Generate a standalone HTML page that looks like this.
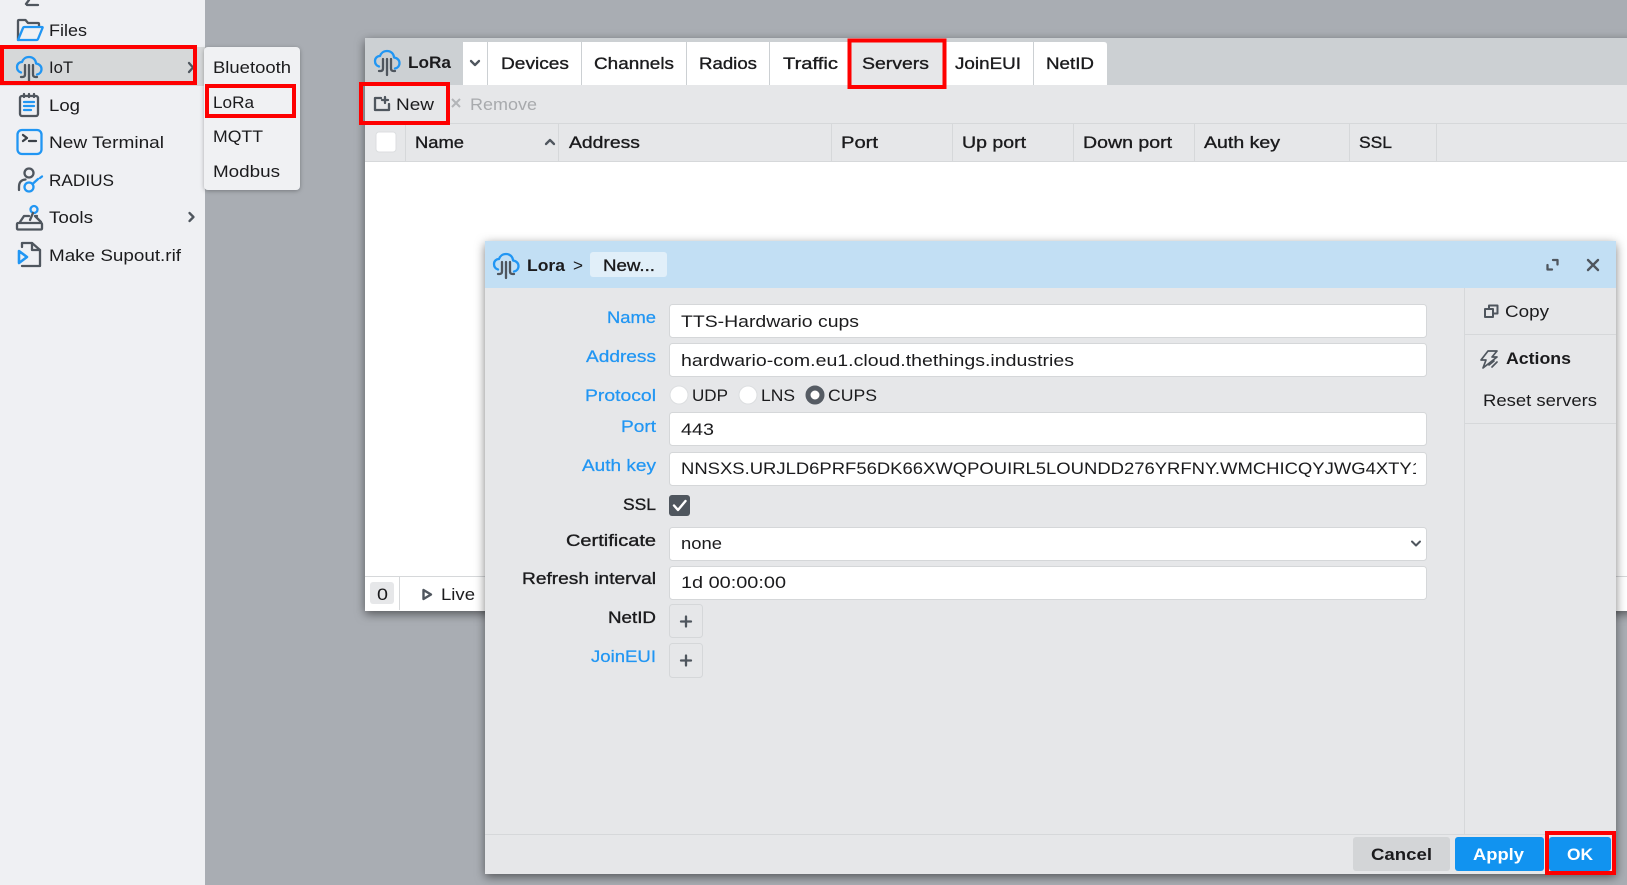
<!DOCTYPE html>
<html><head><meta charset="utf-8"><title>LoRa</title>
<style>
html,body{margin:0;padding:0;width:1627px;height:885px;overflow:hidden;background:#a9adb3}
svg{display:block}
text{font-family:"Liberation Sans",sans-serif;font-size:17px;fill:#1b1b1d}
.m{stroke:#1b1b1d;stroke-width:.35}
.b{font-weight:bold}
.l{fill:#2196f3;stroke:#2196f3;stroke-width:.25}
.g{fill:#a8aaad}
.ic{fill:none;stroke:#4f565e;stroke-width:2.300;stroke-linecap:round;stroke-linejoin:round}
.bl{fill:none;stroke:#2196f3;stroke-width:2.300;stroke-linecap:round;stroke-linejoin:round}
.inp{fill:#fff;stroke:#d5d7d9;stroke-width:1}
.sep{stroke:#d6d8da;stroke-width:1}
.red{fill:none;stroke:#fe0000;stroke-width:4}
</style></head><body>
<svg width="1627" height="885" viewBox="0 0 1627 885" xmlns="http://www.w3.org/2000/svg">
<defs>
<filter id="sh" x="-5%" y="-5%" width="110%" height="112%"><feDropShadow dx="0" dy="3" stdDeviation="5" flood-color="#000" flood-opacity=".5"/></filter>
<filter id="sh2" x="-20%" y="-20%" width="140%" height="140%"><feDropShadow dx="0" dy="1" stdDeviation="2" flood-color="#000" flood-opacity=".3"/></filter>
<clipPath id="authclip"><rect x="670" y="452" width="746" height="34"/></clipPath>
<g id="lora">
<path class="bl" d="M5 16.500C1.800 15.500 1 13 1 11C1 8 3.300 6 6 6C7 3 9.700 1 13 1C17 1 19.800 3.800 20 7.500C23 7.800 25.500 10 25.500 13C25.500 16 23.500 18 21 18.500"/>
<path class="ic" d="M9 9V18.500Q9 21 6.500 21H5M13 9V25M17 9V18.500Q17 21 19.500 21H21"/>
</g>
</defs>

<rect width="1627" height="885" fill="#a9adb3"/>

<!-- sidebar -->
<rect width="205" height="885" fill="#eff0f3"/>
<rect x="0" y="47" width="205" height="39" fill="#d6d8d9"/>
<path class="ic" d="M38 5H27"/><path class="ic" d="M29 0L26 4"/>
<g transform="translate(17,19)">
<path class="ic" d="M1 21V2Q1 1 2 1H8.500L11 4H21Q22 4 22 5V7"/>
<path class="bl" d="M1 21L6 9Q6.500 8 7.500 8H25Q26 8 25.500 9L21 20Q20.500 21 19.500 21H2"/>
</g>
<text x="49" y="36" textLength="38" lengthAdjust="spacingAndGlyphs">Files</text>
<use href="#lora" x="16" y="56"/>
<text x="49" y="73" textLength="24" lengthAdjust="spacingAndGlyphs">IoT</text>
<path class="ic" d="M189 63L193 67.500L189 72"/>
<g transform="translate(18,93)">
<rect class="ic" x="2" y="3" width="18" height="20" rx="2"/>
<path class="ic" d="M6 1V4M11 1V4M16 1V4"/>
<path class="bl" d="M6 9H16M6 13H16M6 17H13"/>
</g>
<text x="49" y="111" textLength="31" lengthAdjust="spacingAndGlyphs">Log</text>
<g transform="translate(16,129)">
<rect class="bl" x="1.500" y="1" width="24" height="24" rx="4.500"/>
<path class="ic" d="M7 6L11 9L7 12M13 12H20" style="stroke:#3b4148"/>
</g>
<text x="49" y="148" textLength="115" lengthAdjust="spacingAndGlyphs">New Terminal</text>
<g transform="translate(17,167)">
<circle class="ic" cx="12" cy="6" r="4.500"/>
<path class="ic" d="M2 23V20Q2 13 8.500 12.500"/>
<circle class="bl" cx="12" cy="20" r="4.500"/>
<path class="bl" d="M15.500 17L21 12M23 11L25 9.500"/>
</g>
<text x="49" y="186" textLength="65" lengthAdjust="spacingAndGlyphs">RADIUS</text>
<g transform="translate(16,205)">
<circle class="bl" cx="18" cy="4.500" r="3.500"/>
<path class="ic" d="M17 8L14 15"/>
<path class="ic" d="M4 17L8 11H13M21 11H19L25 17"/>
<rect class="ic" x="1" y="18" width="25" height="6.500" rx="1"/>
</g>
<text x="49" y="223" textLength="44" lengthAdjust="spacingAndGlyphs">Tools</text>
<path class="ic" d="M189.500 213L193.500 217L189.500 221"/>
<g transform="translate(17,241)">
<path class="ic" d="M5 6V2H15L23 9V25H5"/>
<path class="ic" d="M15 2V9H23"/>
<path class="bl" d="M2 10L10 16L2 22Z" style="stroke-width:2.600"/>
</g>
<text x="49" y="261" textLength="132" lengthAdjust="spacingAndGlyphs">Make Supout.rif</text>
<rect class="red" x="2" y="47" width="193" height="36"/>

<!-- submenu -->
<rect x="204" y="47" width="96" height="143" rx="4" fill="#f0f1f3" filter="url(#sh2)"/>
<text x="213" y="73" textLength="78" lengthAdjust="spacingAndGlyphs">Bluetooth</text>
<text x="213" y="108" textLength="41" lengthAdjust="spacingAndGlyphs">LoRa</text>
<text x="213" y="142" textLength="50" lengthAdjust="spacingAndGlyphs">MQTT</text>
<text x="213" y="177" textLength="67" lengthAdjust="spacingAndGlyphs">Modbus</text>
<rect class="red" x="207" y="86" width="87" height="30"/>

<!-- main window -->
<g filter="url(#sh)"><rect x="365" y="38" width="1270" height="573" fill="#fff"/></g>
<rect x="365" y="38" width="1262" height="47" fill="#ccd0d3"/>
<use href="#lora" x="374" y="50"/>
<text class="b" x="408" y="68" textLength="43" lengthAdjust="spacingAndGlyphs">LoRa</text>
<rect x="463" y="42" width="24" height="43" fill="#fff"/>
<rect x="488" y="42" width="93" height="43" fill="#fff"/>
<rect x="582" y="42" width="104" height="43" fill="#fff"/>
<rect x="687" y="42" width="82" height="43" fill="#fff"/>
<rect x="770" y="42" width="79" height="43" fill="#fff"/>
<rect x="849" y="42" width="96" height="43" fill="#e6e7e9"/>
<rect x="945" y="42" width="88" height="43" fill="#fff"/>
<path d="M1034 42H1104Q1107 42 1107 45V85H1034Z" fill="#fff"/>
<path class="ic" d="M471 61L475 65L479 61"/>
<text class="m" x="501" y="69" textLength="68" lengthAdjust="spacingAndGlyphs">Devices</text>
<text class="m" x="594" y="69" textLength="80" lengthAdjust="spacingAndGlyphs">Channels</text>
<text class="m" x="699" y="69" textLength="58" lengthAdjust="spacingAndGlyphs">Radios</text>
<text class="m" x="783" y="69" textLength="55" lengthAdjust="spacingAndGlyphs">Traffic</text>
<text class="m" x="862" y="69" textLength="67" lengthAdjust="spacingAndGlyphs">Servers</text>
<text class="m" x="955" y="69" textLength="66" lengthAdjust="spacingAndGlyphs">JoinEUI</text>
<text class="m" x="1046" y="69" textLength="48" lengthAdjust="spacingAndGlyphs">NetID</text>

<rect x="365" y="85" width="1262" height="38" fill="#e6e7e9"/>
<path class="ic" d="M381 98H375V110H389V104"/><path class="ic" d="M385 97V103M382 100H388"/>
<text x="396" y="110" textLength="38" lengthAdjust="spacingAndGlyphs">New</text>
<path d="M452 99L460 107M460 99L452 107" fill="none" stroke="#b3b5b8" stroke-width="2"/>
<text class="g" x="470" y="110" textLength="67" lengthAdjust="spacingAndGlyphs">Remove</text>

<rect x="365" y="123" width="1262" height="39" fill="#e6e7e9"/>
<path class="sep" d="M365 123.500H1627M365 161.500H1627M405.500 123V162M558.500 123V162M831.500 123V162M952.500 123V162M1073.500 123V162M1194.500 123V162M1349.500 123V162M1436.500 123V162"/>
<rect x="376" y="132" width="20" height="20" rx="3" fill="#fff" stroke="#dcdee0"/>
<text class="m" x="415" y="148" textLength="49" lengthAdjust="spacingAndGlyphs">Name</text>
<path class="ic" d="M546 144L550 140L554 144"/>
<text class="m" x="569" y="148" textLength="71" lengthAdjust="spacingAndGlyphs">Address</text>
<text class="m" x="841" y="148" textLength="37" lengthAdjust="spacingAndGlyphs">Port</text>
<text class="m" x="962" y="148" textLength="64" lengthAdjust="spacingAndGlyphs">Up port</text>
<text class="m" x="1083" y="148" textLength="89" lengthAdjust="spacingAndGlyphs">Down port</text>
<text class="m" x="1204" y="148" textLength="76" lengthAdjust="spacingAndGlyphs">Auth key</text>
<text class="m" x="1359" y="148" textLength="33" lengthAdjust="spacingAndGlyphs">SSL</text>

<path class="sep" d="M365 576.500H1627M399.500 576V610"/>
<rect x="370" y="582" width="24" height="22" rx="3" fill="#e6e7e9"/>
<text x="377" y="600" textLength="11" lengthAdjust="spacingAndGlyphs">0</text>
<path d="M423.500 590L431 594.500L423.500 599Z" fill="none" stroke="#4f565e" stroke-width="2.400" stroke-linejoin="round"/>
<text x="441" y="600" textLength="34" lengthAdjust="spacingAndGlyphs">Live</text>

<path class="red" d="M849.500 87V40.500H944.500V87Z"/>
<rect class="red" x="361" y="84" width="87" height="39"/>

<!-- dialog -->
<rect x="485" y="241" width="1131" height="633" fill="#e6e7e9" filter="url(#sh)"/>
<rect x="485" y="241" width="1131" height="47" fill="#c2dff4"/>
<use href="#lora" x="493" y="253"/>
<text class="b" x="527" y="271" textLength="38" lengthAdjust="spacingAndGlyphs">Lora</text>
<text x="573" y="271" textLength="10" lengthAdjust="spacingAndGlyphs">&gt;</text>
<rect x="590" y="252" width="77" height="25" rx="3" fill="#e1eff9"/>
<text class="m" x="603" y="271" textLength="52" lengthAdjust="spacingAndGlyphs">New...</text>
<path class="ic" d="M1553 260H1557.500V264.500M1552 269.500H1547.500V265"/>
<path class="ic" d="M1588 260L1598 270M1598 260L1588 270" style="stroke-width:2.400"/>

<!-- side panel -->
<path class="sep" d="M1464.500 288V834M1465 334.500H1616M1465 423.500H1616M485 834.500H1616"/>
<g transform="translate(1484,304)">
<path class="ic" d="M5 5V1.500H13.500V9.500H9" style="stroke-width:2"/>
<rect class="ic" x="1" y="5" width="8" height="8" style="stroke-width:2"/>
</g>
<text x="1505" y="317" textLength="44" lengthAdjust="spacingAndGlyphs">Copy</text>
<g transform="translate(1480,350)">
<path class="ic" d="M8 1H17L12 7H17L3 18L6 10H1Z" style="stroke-width:1.700"/>
<path class="ic" d="M9 15L14 11M12 17L17 12" style="stroke-width:1.700"/>
</g>
<text class="b" x="1506" y="364" textLength="65" lengthAdjust="spacingAndGlyphs">Actions</text>
<text x="1483" y="406" textLength="114" lengthAdjust="spacingAndGlyphs">Reset servers</text>

<!-- form labels -->
<text class="l" x="607" y="323" textLength="49" lengthAdjust="spacingAndGlyphs">Name</text>
<text class="l" x="586" y="362" textLength="70" lengthAdjust="spacingAndGlyphs">Address</text>
<text class="l" x="585" y="401" textLength="71" lengthAdjust="spacingAndGlyphs">Protocol</text>
<text class="l" x="621" y="432" textLength="35" lengthAdjust="spacingAndGlyphs">Port</text>
<text class="l" x="582" y="471" textLength="74" lengthAdjust="spacingAndGlyphs">Auth key</text>
<text class="m" x="623" y="510" textLength="33" lengthAdjust="spacingAndGlyphs">SSL</text>
<text class="m" x="566" y="546" textLength="90" lengthAdjust="spacingAndGlyphs">Certificate</text>
<text class="m" x="522" y="584" textLength="134" lengthAdjust="spacingAndGlyphs">Refresh interval</text>
<text class="m" x="608" y="623" textLength="48" lengthAdjust="spacingAndGlyphs">NetID</text>
<text class="l" x="591" y="662" textLength="65" lengthAdjust="spacingAndGlyphs">JoinEUI</text>

<!-- inputs -->
<rect class="inp" x="669.500" y="304.500" width="757" height="33" rx="3"/>
<text x="681" y="327" textLength="178" lengthAdjust="spacingAndGlyphs">TTS-Hardwario cups</text>
<rect class="inp" x="669.500" y="343.500" width="757" height="33" rx="3"/>
<text x="681" y="366" textLength="393" lengthAdjust="spacingAndGlyphs">hardwario-com.eu1.cloud.thethings.industries</text>

<circle cx="679" cy="395" r="9" fill="#fff" stroke="#dcdee0"/>
<text x="692" y="401" textLength="36" lengthAdjust="spacingAndGlyphs">UDP</text>
<circle cx="748" cy="395" r="9" fill="#fff" stroke="#dcdee0"/>
<text x="761" y="401" textLength="34" lengthAdjust="spacingAndGlyphs">LNS</text>
<circle cx="815" cy="395" r="7" fill="#fff" stroke="#565c64" stroke-width="5"/>
<text x="828" y="401" textLength="49" lengthAdjust="spacingAndGlyphs">CUPS</text>

<rect class="inp" x="669.500" y="412.500" width="757" height="33" rx="3"/>
<text x="681" y="435" textLength="33" lengthAdjust="spacingAndGlyphs">443</text>
<rect class="inp" x="669.500" y="452.500" width="757" height="33" rx="3"/>
<text x="681" y="474" textLength="741" lengthAdjust="spacingAndGlyphs" clip-path="url(#authclip)">NNSXS.URJLD6PRF56DK66XWQPOUIRL5LOUNDD276YRFNY.WMCHICQYJWG4XTY1</text>

<rect x="669" y="495" width="21" height="21" rx="3" fill="#4f565e"/>
<path d="M674 505.500L678 510L685.500 501" fill="none" stroke="#fff" stroke-width="2.400" stroke-linecap="round" stroke-linejoin="round"/>

<rect class="inp" x="669.500" y="527.500" width="757" height="33" rx="3"/>
<text x="681" y="549" textLength="41" lengthAdjust="spacingAndGlyphs">none</text>
<path class="ic" d="M1412 541.500L1416 545.500L1420 541.500" style="stroke-width:2"/>
<rect class="inp" x="669.500" y="566.500" width="757" height="33" rx="3"/>
<text x="681" y="588" textLength="105" lengthAdjust="spacingAndGlyphs">1d 00:00:00</text>

<rect x="669.500" y="604.500" width="33" height="33" rx="3" fill="#e6e7e9" stroke="#d5d7d9"/>
<path class="ic" d="M681 621.500H691M686 616.500V626.500"/>
<rect x="669.500" y="643.500" width="33" height="34" rx="3" fill="#e6e7e9" stroke="#d5d7d9"/>
<path class="ic" d="M681 660.500H691M686 655.500V665.500"/>

<!-- footer buttons -->
<rect x="1353" y="837" width="97" height="34" rx="3" fill="#d3d5d7"/>
<text class="b" x="1371" y="860" textLength="61" lengthAdjust="spacingAndGlyphs">Cancel</text>
<rect x="1455" y="837" width="89" height="34" rx="3" fill="#1193f0"/>
<text class="b" x="1473" y="860" textLength="51" lengthAdjust="spacingAndGlyphs" style="fill:#fff">Apply</text>
<rect x="1549" y="837" width="62" height="34" rx="3" fill="#1193f0"/>
<text class="b" x="1567" y="860" textLength="26" lengthAdjust="spacingAndGlyphs" style="fill:#fff">OK</text>
<rect class="red" x="1547" y="833" width="67" height="40"/>
</svg>
</body></html>
